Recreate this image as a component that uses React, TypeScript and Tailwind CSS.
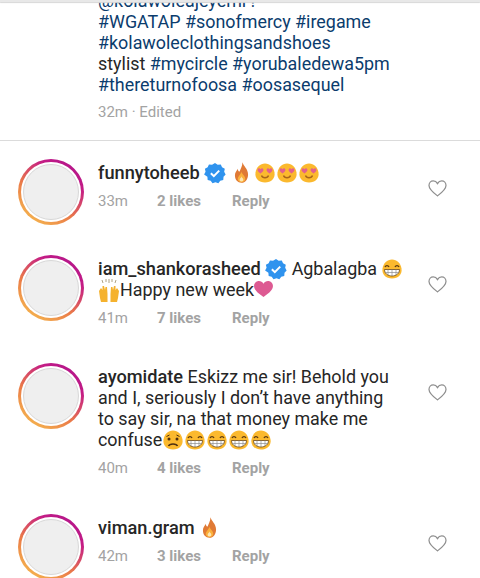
import React from "react";

const font = { fontFamily: "Roboto, 'Liberation Sans', sans-serif" };

function Avatar() {
  return (
    <div className="shrink-0 h-[66px] w-[66px] rounded-full bg-[linear-gradient(35deg,#f5b54e_10%,#ea7a48_40%,#c41c85_72%,#a9118f_100%)] p-[3px]">
      <div className="h-full w-full rounded-full bg-white p-[2px]">
        <div className="h-full w-full rounded-full border border-[#d8d8d8] bg-[#efefef]" />
      </div>
    </div>
  );
}

function Verified() {
  return (
    <svg viewBox="0 0 24 24" className="inline-block -my-[4px] h-[22px] w-[22px] align-[-1px]">
      <path
        d="M12 1l2.9 1.9 3.4-.3 1.4 3.1 3 1.6-.7 3.4 1.6 3-2.3 2.5-.3 3.4-3.3.8-2 2.8-3.2-1.2-3.2 1.2-2-2.8-3.3-.8-.3-3.4L.1 13.7l1.6-3-.7-3.4 3-1.6 1.4-3.1 3.4.3z"
        fill="#2f93ee"
      />
      <path d="M7.5 12.3l3.2 3.1 5.9-6" fill="none" stroke="#fff" strokeWidth="2.2" />
    </svg>
  );
}

function Flame() {
  return (
    <svg viewBox="0 0 16 22" className="inline-block -my-[4px] ml-[3px] mr-[5px] h-[21px] w-[15px] align-baseline">
      <path d="M9 0c1 4 6 7 6 13 0 5-3 9-7 9s-7-3-7-8c0-3 2-5 3-7 0 2 1 3 2 3 1-3 3-6 3-10z" fill="#e07a35" />
      <path d="M8 10c0 3 4 4 4 8 0 2-2 3.500-4 3.500S4 20 4 18c0-3 3-4 4-8z" fill="#fbb03b" />
      <path d="M8 15c0 1.500 2 2 2 4 0 1-1 1.500-2 1.500S6 20 6 19c0-2 2-2.500 2-4z" fill="#fde6b0" />
    </svg>
  );
}

function Face({ kind }: { kind: "love" | "grin" | "sad" }) {
  return (
    <svg viewBox="0 0 22 22" className="inline-block -my-[4px] h-[22px] w-[22px] align-[-1px]">
      <path d="M11 1.500c5 0 8.500 3.500 9.500 9 1 6-3.500 10-9.500 10S.5 16.500 1.500 10.500C2.500 5 6 1.500 11 1.500z" fill="#fbb92e" />
      {kind === "love" && (
        <>
          <path d="M6.500 11.500C4 9.500 3.200 8.500 3.700 7.200 4.200 6 5.800 6 6.500 7.300 7.200 6 8.800 6 9.300 7.200 9.800 8.500 9 9.500 6.500 11.500z" fill="#e2618c" />
          <path d="M15.500 11.500C13 9.500 12.200 8.500 12.700 7.200 13.200 6 14.800 6 15.500 7.300 16.200 6 17.800 6 18.300 7.200 18.800 8.500 18 9.500 15.500 11.500z" fill="#e2618c" />
          <path d="M7.500 13.500c1 3 6 3 7 0" fill="none" stroke="#a8651a" strokeWidth="1.400" />
        </>
      )}
      {kind === "grin" && (
        <>
          <path d="M4 9c.8-1.800 3.200-1.800 4 0M14 9c.8-1.800 3.200-1.800 4 0" fill="none" stroke="#5b3a12" strokeWidth="1.300" />
          <path d="M3.500 11.500h15c0 4-3.500 6.500-7.500 6.500S3.500 15.500 3.500 11.500z" fill="#fff" stroke="#6b4513" strokeWidth="0.8" />
          <path d="M3.800 14.500h14.400M7 11.500v5.500M11 11.500v6.500M15 11.500v5.500" stroke="#8d8d8d" strokeWidth="0.7" />
        </>
      )}
      {kind === "sad" && (
        <>
          <path d="M4.500 7.500l3-1.500M17.500 7.500l-3-1.500" stroke="#4e3010" strokeWidth="1" />
          <circle cx="7" cy="10" r="1.500" fill="#4e3010" />
          <circle cx="15" cy="10" r="1.500" fill="#4e3010" />
          <path d="M6.500 17c1-2.800 8-2.800 9 0" fill="none" stroke="#4e3010" strokeWidth="1.500" />
        </>
      )}
    </svg>
  );
}

function Hands() {
  return (
    <svg viewBox="0 0 22 24" className="inline-block -my-[4px] h-[24px] w-[22px] align-[-2px]">
      <path d="M1 13l2-3 1.500 2V8h1.500l1 4 .5-3h1.500l.5 7v8H3l-1-4z" fill="#f5b22e" />
      <path d="M21 13l-2-3-1.500 2V8H16l-1 4-.5-3H13l-.5 7v8H19l1-4z" fill="#f5b22e" />
      <path d="M5 5l-1-3M8 4V1M11 5V1M14 4V1M17 5l1-3" stroke="#9a8a66" strokeWidth="0.8" fill="none" />
    </svg>
  );
}

function PinkHeart() {
  return (
    <svg viewBox="0 0 20 18" className="inline-block -my-[2px] h-[17px] w-[19px] align-baseline">
      <path d="M10 17C3 12 0 9 0 5.300 0 2.300 2.300 0 5.200 0 7.200 0 9 1 10 2.800 11 1 12.800 0 14.800 0 17.700 0 20 2.300 20 5.300 20 9 17 12 10 17z" fill="#dd5a92" />
    </svg>
  );
}

function HeartOutline() {
  return (
    <svg viewBox="0 0 20 18" className="h-[17px] w-[19px]" fill="none" stroke="#8e8e8e" strokeWidth="1.300">
      <path d="M10 16.800C3.800 12 1 9.200 1 5.700 1 3 3 1 5.500 1 7.400 1 9 2 10 3.800 11 2 12.600 1 14.500 1 17 1 19 3 19 5.700 19 9.200 16.200 12 10 16.800z" />
    </svg>
  );
}

function Comment({
  children,
  time,
  likes,
  className,
}: {
  children: React.ReactNode;
  time: string;
  likes: string;
  className: string;
}) {
  return (
    <div className={`flex items-start pl-[18px] ${className}`}>
      <Avatar />
      <div className="ml-[14px] w-[306px] pt-[3px]">
        <div className="text-[17.9px] leading-[21px] text-[#262626]">{children}</div>
        <div className="mt-[8px] flex text-[15px] leading-[20px] text-[#a3a3a3]">
          <span className="w-[59px]">{time}</span>
          <span className="w-[75px] font-bold">{likes}</span>
          <span className="font-bold">Reply</span>
        </div>
      </div>
      <div className="ml-[24px] mt-[21px]">
        <HeartOutline />
      </div>
    </div>
  );
}

const Name = ({ children }: { children: React.ReactNode }) => (
  <span className="text-[18.2px] font-medium">{children}</span>
);

export default function App() {
  const tag = "text-[#0b3c6d]";
  return (
    <div className="relative h-[578px] w-[480px] overflow-hidden bg-white" style={font}>
      <div className="absolute inset-x-0 top-0 h-[2px] bg-[#e8e8e8] shadow-[0_1px_1px_#d8d8d8]" />

      <div className="-mt-[10px] border-b border-[#dbdbdb] pb-[18px] pl-[98px] pr-4 text-[17.9px] leading-[21px] text-[#262626]">
        <div className={tag}>@kolawoleajeyemi !</div>
        <div className={tag}>#WGATAP #sonofmercy #iregame</div>
        <div className={tag}>#kolawoleclothingsandshoes</div>
        <div>
          stylist <span className={tag}>#mycircle #yorubaledewa5pm</span>
        </div>
        <div className={tag}>#thereturnofoosa #oosasequel</div>
        <div className="mt-[7px] text-[15px] leading-[20px] text-[#a3a3a3]">32m · Edited</div>
      </div>

      <Comment time="33m" likes="2 likes" className="mt-[18px]">
        <Name>funnytoheeb</Name> <Verified /> <Flame />
        <Face kind="love" />
        <Face kind="love" />
        <Face kind="love" />
      </Comment>

      <Comment time="41m" likes="7 likes" className="mt-[30px]">
        <Name>iam_shankorasheed</Name> <Verified /> Agbalagba <Face kind="grin" />
        <br />
        <Hands />
        Happy new week
        <PinkHeart />
      </Comment>

      <Comment time="40m" likes="4 likes" className="mt-[35px]">
        <Name>ayomidate</Name> Eskizz me sir! Behold you
        <br />
        and I, seriously I don’t have anything
        <br />
        to say sir, na that money make me
        <br />
        confuse
        <Face kind="sad" />
        <Face kind="grin" />
        <Face kind="grin" />
        <Face kind="grin" />
        <Face kind="grin" />
      </Comment>

      <Comment time="42m" likes="3 likes" className="mt-[36px]">
        <Name>viman.gram</Name> <Flame />
      </Comment>
    </div>
  );
}
